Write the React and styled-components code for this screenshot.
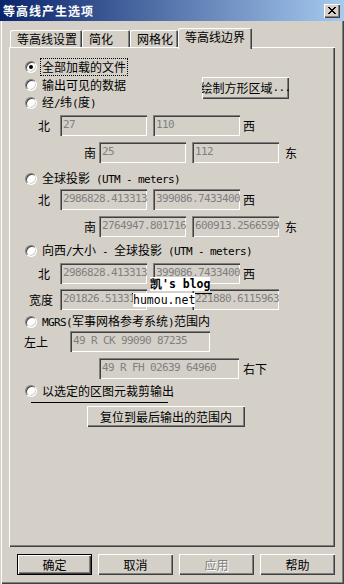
import React from 'react';
import styled, { createGlobalStyle, css } from 'styled-components';

const CJK = `"Noto Sans CJK SC", "Noto Sans", sans-serif`;
const MONO = `"DejaVu Sans Mono", "Liberation Mono", monospace`;

const Global = createGlobalStyle`
  html, body { margin: 0; padding: 0; background: #D4D0C8; }
  body { width: 344px; height: 584px; overflow: hidden; }
  * { box-sizing: border-box; }
`;

const Window = styled.div`
  width: 344px;
  height: 584px;
  display: flex;
  flex-direction: column;
  background: #D4D0C8;
  font-family: ${CJK};
  font-size: 12px;
  color: #000;
`;

const TitleBar = styled.div`
  height: 21px;
  flex: none;
  display: flex;
  align-items: center;
  justify-content: space-between;
  padding: 0 4px 0 3px;
  background: linear-gradient(to right, #0A246A, #A6CAF0);
`;

const TitleText = styled.span`
  color: #fff;
  font-weight: bold;
  font-size: 12px;
  letter-spacing: 1px;
  line-height: 14px;
`;

const CloseBtn = styled.div`
  width: 16px;
  height: 14px;
  background: #D4D0C8;
  box-shadow: inset 1px 1px #fff, inset -1px -1px #404040, inset -2px -2px #808080;
  display: flex;
  align-items: center;
  justify-content: center;
  padding-bottom: 1px;
`;

const Body = styled.div`
  flex: 1;
  display: flex;
  flex-direction: column;
  padding: 7px 9px 9px 9px;
  box-shadow: inset 1px 0 #D4D0C8, inset 2px 0 #fff, inset -1px -1px #404040, inset -2px -2px #808080;
`;

const TabStrip = styled.div`
  display: flex;
  align-items: flex-end;
  height: 19px;
  padding-left: 1px;
  flex: none;
  position: relative;
  z-index: 1;
`;

const Tab = styled.div`
  width: ${p => p.$w}px;
  height: ${p => (p.$active ? 21 : 17)}px;
  margin-bottom: ${p => (p.$active ? -2 : 0)}px;
  padding-left: 7px;
  padding-top: ${p => (p.$active ? 2 : 2)}px;
  background: #D4D0C8;
  border-radius: 2px 2px 0 0;
  box-shadow: inset 1px 1px #fff, inset -1px 0 #404040, inset -2px 0 #808080;
  line-height: 14px;
  white-space: nowrap;
`;

const Panel = styled.div`
  position: relative;
  height: 500px;
  flex: none;
  display: flex;
  flex-direction: column;
  padding-top: 11px;
  box-shadow: inset 1px 1px #fff, inset -1px -1px #404040, inset -2px -2px #808080;
`;

const Row = styled.div`
  display: flex;
  align-items: center;
  flex: none;
  height: ${p => p.$h}px;
  margin-top: ${p => p.$mt || 0}px;
  padding-left: ${p => p.$indent}px;
  padding-right: ${p => p.$pr || 0}px;
`;

const Radio = styled.span`
  width: 12px;
  height: 12px;
  flex: none;
  border-radius: 50%;
  background: #fff;
  border: 1px solid;
  border-color: #808080 #fff #fff #808080;
  box-shadow: inset 1px 1px #404040, inset -1px -1px #D4D0C8;
  display: flex;
  align-items: center;
  justify-content: center;
  &::after {
    content: '';
    width: 4px;
    height: 4px;
    border-radius: 50%;
    background: #000;
    display: ${p => (p.$checked ? 'block' : 'none')};
  }
`;

const Label = styled.span`
  margin-left: ${p => p.$ml || 0}px;
  line-height: 14px;
  white-space: nowrap;
  flex: none;
  ${p => p.$focus && css`
    outline: 1px dotted #000;
    outline-offset: 1px;
  `}
`;

const Half = styled.span`
  font-family: ${MONO};
  font-size: 11px;
  letter-spacing: -0.62px;
  white-space: pre;
`;

const Field = styled.div`
  width: ${p => p.$w}px;
  height: 21px;
  flex: none;
  margin-left: ${p => p.$ml || 0}px;
  background: #D4D0C8;
  box-shadow: inset 1px 1px #808080, inset 2px 2px #404040, inset -1px -1px #fff, inset -2px -2px #D4D0C8;
  padding: 3px 2px 0 3px;
  overflow: hidden;
  white-space: nowrap;
  font-family: ${MONO};
  font-size: 11px;
  letter-spacing: -0.62px;
  line-height: 13px;
  color: #808080;
`;

const Btn = styled.div`
  width: ${p => p.$w}px;
  height: ${p => p.$h || 21}px;
  flex: none;
  margin-left: ${p => p.$ml || 0}px;
  ${p => p.$auto && css`margin-left: auto;`}
  align-self: ${p => (p.$top ? 'flex-start' : 'auto')};
  margin-top: ${p => p.$mt || 0}px;
  display: flex;
  align-items: center;
  justify-content: center;
  overflow: hidden;
  white-space: nowrap;
  background: #D4D0C8;
  line-height: 14px;
  box-shadow: inset 1px 1px #fff, inset -1px -1px #404040, inset -2px -2px #808080;
  ${p => p.$default && css`border: 1px solid #000;`}
  color: ${p => (p.$disabled ? '#808080' : '#000')};
  text-shadow: ${p => (p.$disabled ? '1px 1px #fff' : 'none')};
`;

const Rule = styled.div`
  height: 1px;
  width: ${p => p.$w}px;
  margin-top: ${p => p.$mt}px;
  margin-left: ${p => p.$indent}px;
  background: #000;
  flex: none;
`;

const Footer = styled.div`
  display: flex;
  justify-content: flex-end;
  gap: 6px;
  margin-top: 7px;
  flex: none;
`;

const Watermark = styled.div`
  position: absolute;
  left: 123px;
  top: 230px;
  font-family: ${MONO};
  font-size: 11.5px;
  line-height: 14px;
  color: #000;
  z-index: 2;
`;

const WmTop = styled.div`
  padding-left: 18px;
  font-weight: bold;
  width: 80px;
  span { background: #fff; }
`;

const WmBottom = styled.div`
  width: 80px;
  border-top: 1px solid #000;
  margin-top: 2px;
  padding-left: 1px;
  line-height: 12px;
  span { background: #fff; }
`;

const T = ({ children }) => {
  const parts = String(children).split(/([\x20-\x7e]+)/).filter(Boolean);
  return parts.map((p, i) =>
    /^[\x20-\x7e]+$/.test(p) ? <Half key={i}>{p}</Half> : <React.Fragment key={i}>{p}</React.Fragment>
  );
};

const CloseIcon = () => {
  const rects = [];
  for (let r = 0; r < 7; r++) {
    rects.push(<rect key={'a' + r} x={r} y={r} width="2" height="1" fill="#000" />);
    rects.push(<rect key={'b' + r} x={6 - r} y={r} width="2" height="1" fill="#000" />);
  }
  return (
    <svg width="8" height="7" viewBox="0 0 8 7" shapeRendering="crispEdges">
      {rects}
    </svg>
  );
};

const RadioRow = ({ mt, checked, focus, label, children, pr }) => (
  <Row $h={18} $mt={mt} $indent={16} $pr={pr}>
    <Radio $checked={checked} />
    <Label $ml={5} $focus={focus}><T>{label}</T></Label>
    {children}
  </Row>
);

export default function App() {
  return (
    <>
      <Global />
      <Window>
        <TitleBar>
          <TitleText>等高线产生选项</TitleText>
          <CloseBtn><CloseIcon /></CloseBtn>
        </TitleBar>
        <Body>
          <TabStrip>
            <Tab $w={72}>等高线设置</Tab>
            <Tab $w={48}>简化</Tab>
            <Tab $w={48}>网格化</Tab>
            <Tab $w={74} $active>等高线边界</Tab>
          </TabStrip>
          <Panel>
            <RadioRow checked focus label="全部加载的文件" />
            <RadioRow label="输出可见的数据" pr={46}>
              <Btn $w={87} $h={22} $auto $top $mt={1}><T>绘制方形区域...</T></Btn>
            </RadioRow>
            <RadioRow label="经/纬(度)" />
            <Row $h={21} $mt={3} $indent={29}>
              <Label>北</Label>
              <Field $w={87} $ml={10}>27</Field>
              <Field $w={87} $ml={6}>110</Field>
              <Label $ml={3}>西</Label>
            </Row>
            <Row $h={21} $mt={6} $indent={75}>
              <Label>南</Label>
              <Field $w={87} $ml={3}>25</Field>
              <Field $w={87} $ml={6}>112</Field>
              <Label $ml={6}>东</Label>
            </Row>
            <RadioRow mt={7} label="全球投影 (UTM - meters)" />
            <Row $h={21} $mt={1} $indent={29}>
              <Label>北</Label>
              <Field $w={87} $ml={10}>2986828.41331338</Field>
              <Field $w={87} $ml={6}>399086.74334001</Field>
              <Label $ml={3}>西</Label>
            </Row>
            <Row $h={21} $mt={6} $indent={75}>
              <Label>南</Label>
              <Field $w={87} $ml={3}>2764947.80171632</Field>
              <Field $w={87} $ml={6}>600913.25665992</Field>
              <Label $ml={6}>东</Label>
            </Row>
            <RadioRow mt={5} label="向西/大小 - 全球投影 (UTM - meters)" />
            <Row $h={21} $mt={3} $indent={29}>
              <Label>北</Label>
              <Field $w={87} $ml={10}>2986828.41331338</Field>
              <Field $w={87} $ml={6}>399086.74334001</Field>
              <Label $ml={3}>西</Label>
            </Row>
            <Row $h={21} $mt={5} $indent={20}>
              <Label>宽度</Label>
              <Field $w={87} $ml={7}>201826.51331204</Field>
              <Field $w={87} $ml={45}>221880.61159634</Field>
            </Row>
            <RadioRow mt={3} label="MGRS(军事网格参考系统)范围内" />
            <Row $h={21} $indent={15}>
              <Label>左上</Label>
              <Field $w={140} $ml={22}>49 R CK 99090 87235</Field>
            </Row>
            <Row $h={21} $mt={6} $indent={90}>
              <Field $w={140}>49 R FH 02639 64960</Field>
              <Label $ml={4}>右下</Label>
            </Row>
            <RadioRow mt={3} label="以选定的区图元裁剪输出" />
            <Rule $mt={2} $indent={22} $w={137} />
            <Row $h={21} $mt={3} $indent={78}>
              <Btn $w={158}>复位到最后输出的范围内</Btn>
            </Row>
            <Watermark>
              <WmTop><span>凯's blog</span></WmTop>
              <WmBottom><span>humou.net</span></WmBottom>
            </Watermark>
          </Panel>
          <Footer>
            <Btn $w={75} $default>确定</Btn>
            <Btn $w={75}>取消</Btn>
            <Btn $w={75} $disabled>应用</Btn>
            <Btn $w={75}>帮助</Btn>
          </Footer>
        </Body>
      </Window>
    </>
  );
}
